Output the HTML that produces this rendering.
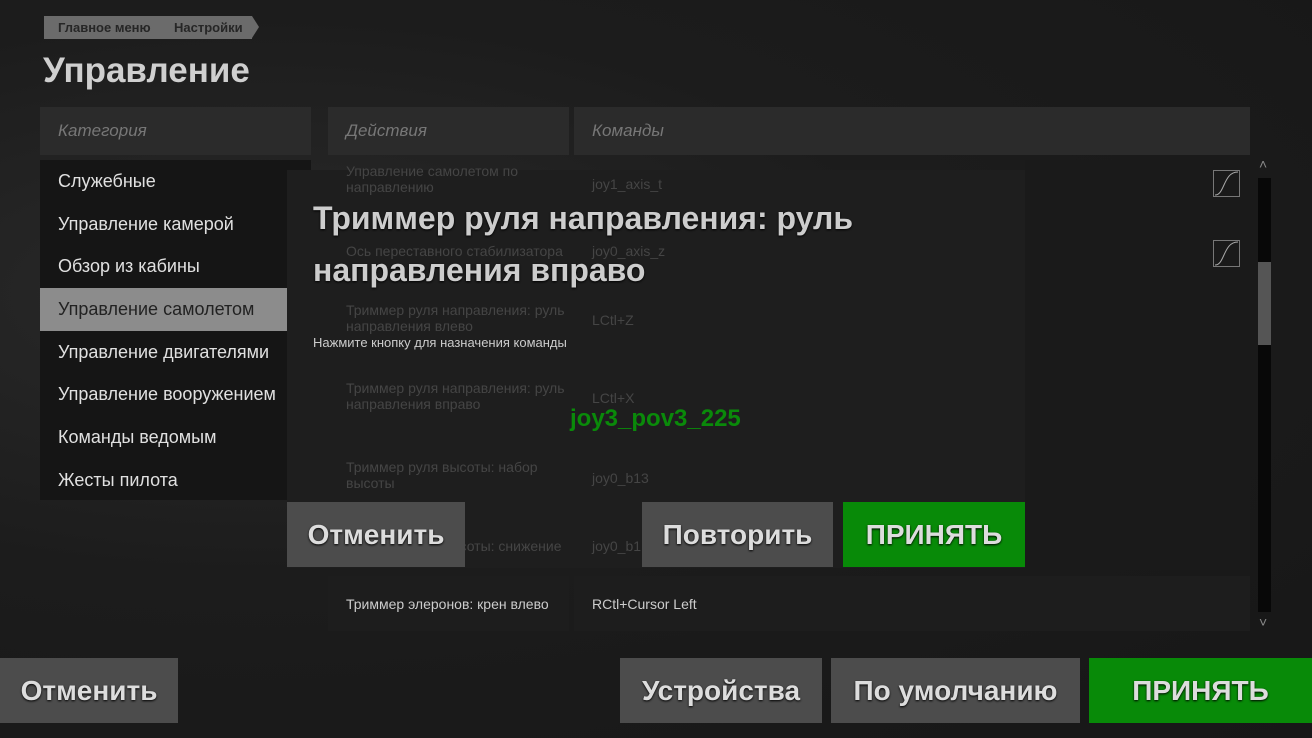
<!DOCTYPE html><html><head><meta charset="utf-8"><style>
*{margin:0;padding:0;box-sizing:border-box}
body{width:1312px;height:738px;overflow:hidden;background:#1b1b1b;font-family:"Liberation Sans Narrow","Liberation Sans",sans-serif;position:relative;color:#ddd}
.a{position:absolute}
.bg{background:radial-gradient(ellipse at 20% 40%,#2a2a2a 0,#1c1c1c 45%,#171717 100%)}
.crumb{top:16px;height:23px;background:#6b6b6b;color:#262626;font-weight:bold;font-size:13px;line-height:23px}
.hdr{top:107px;height:48px;background:#2b2b2b;color:#777;font-style:italic;font-size:17px;line-height:48px;padding-left:18px}
.cat{left:40px;width:247px;height:43px;line-height:43px;padding-left:18px;font-size:18px;color:#e0e0e0}
.cell{background:#1d1d1d}
.btn{height:65px;background:#4c4c4c;color:#ddd;font-size:28px;font-weight:bold;text-align:center;line-height:65px;text-shadow:0 1px 2px #000}
.g{background:#088a08}
.dim{color:#454545;font-size:14px}
</style></head><body>
<div class="a bg" style="left:0;top:0;width:1312px;height:738px"></div>
<div class="a crumb" style="left:44px;width:120px;padding-left:14px">Главное меню</div>
<div class="a crumb" style="left:164px;width:88px;padding-left:10px">Настройки</div>
<div class="a" style="left:252px;top:16px;border-left:7px solid #6b6b6b;border-top:11.5px solid transparent;border-bottom:11.5px solid transparent"></div>
<div class="a" style="left:43px;top:51px;font-size:35px;font-weight:bold;color:#cfcfcf">Управление</div>
<div class="a hdr" style="left:40px;width:271px">Категория</div>
<div class="a hdr" style="left:328px;width:241px">Действия</div>
<div class="a hdr" style="left:574px;width:676px">Команды</div>
<div class="a" style="left:40px;top:160px;width:271px;height:340px;background:#151515"></div>
<div class="a cat" style="top:160px">Служебные</div>
<div class="a cat" style="top:203px">Управление камерой</div>
<div class="a cat" style="top:245px">Обзор из кабины</div>
<div class="a cat" style="top:288px;background:#8c8c8c;color:#222">Управление самолетом</div>
<div class="a cat" style="top:331px">Управление двигателями</div>
<div class="a cat" style="top:373px">Управление вооружением</div>
<div class="a cat" style="top:416px">Команды ведомым</div>
<div class="a cat" style="top:459px">Жесты пилота</div>
<!-- table -->
<div class="a cell" style="left:328px;top:576px;width:241px;height:55px"></div>
<div class="a cell" style="left:574px;top:576px;width:676px;height:55px"></div>
<div class="a" style="left:346px;top:596px;font-size:14px;color:#ccc">Триммер элеронов: крен влево</div>
<div class="a" style="left:592px;top:596px;font-size:14px;color:#ccc">RCtl+Cursor Left</div>
<div class="a cell" style="left:1025px;top:160px;width:225px;height:410px;background:#1a1a1a"></div>
<svg class="a" style="left:1213px;top:170px" width="27" height="27"><rect x=".5" y=".5" width="26" height="26" fill="none" stroke="#777"/><path d="M2 25C12 25 10 2 25 2" fill="none" stroke="#aaa"/></svg>
<svg class="a" style="left:1213px;top:240px" width="27" height="27"><rect x=".5" y=".5" width="26" height="26" fill="none" stroke="#777"/><path d="M2 25C12 25 10 2 25 2" fill="none" stroke="#aaa"/></svg>
<div class="a" style="left:1258px;top:178px;width:13px;height:434px;background:#080808"></div>
<div class="a" style="left:1258px;top:262px;width:13px;height:83px;background:#555"></div>
<div class="a" style="left:1259px;top:156px;font-size:14px;color:#888">˄</div>
<div class="a" style="left:1259px;top:614px;font-size:14px;color:#888">˅</div>
<!-- modal -->
<div class="a" style="left:287px;top:170px;width:738px;height:398px;background:#1e1e1e"></div>
<div class="a dim" style="left:346px;top:163px">Управление самолетом по<br>направлению</div>
<div class="a dim" style="left:592px;top:176px">joy1_axis_t</div>
<div class="a dim" style="left:346px;top:243px">Ось переставного стабилизатора</div>
<div class="a dim" style="left:592px;top:243px">joy0_axis_z</div>
<div class="a dim" style="left:592px;top:312px">LCtl+Z</div>
<div class="a dim" style="left:346px;top:302px">Триммер руля направления: руль<br>направления влево</div>
<div class="a dim" style="left:346px;top:380px">Триммер руля направления: руль<br>направления вправо</div>
<div class="a dim" style="left:592px;top:390px">LCtl+X</div>
<div class="a dim" style="left:346px;top:459px">Триммер руля высоты: набор<br>высоты</div>
<div class="a dim" style="left:592px;top:470px">joy0_b13</div>
<div class="a dim" style="left:346px;top:538px">Триммер руля высоты: снижение</div>
<div class="a dim" style="left:592px;top:538px">joy0_b1</div>
<div class="a" style="left:313px;top:192px;font-size:32px;line-height:52px;font-weight:bold;color:#cdcdcd;text-shadow:0 1px 2px #000">Триммер руля направления: руль<br>направления вправо</div>
<div class="a" style="left:313px;top:335px;font-size:13px;color:#ccc">Нажмите кнопку для назначения команды</div>
<div class="a" style="left:570px;top:405px;font-size:24px;font-weight:bold;color:#0a8a0a">joy3_pov3_225</div>
<div class="a btn" style="left:287px;top:502px;width:178px">Отменить</div>
<div class="a btn" style="left:642px;top:502px;width:191px">Повторить</div>
<div class="a btn g" style="left:843px;top:502px;width:182px">ПРИНЯТЬ</div>
<!-- bottom -->
<div class="a btn" style="left:0;top:658px;width:178px">Отменить</div>
<div class="a btn" style="left:620px;top:658px;width:202px">Устройства</div>
<div class="a btn" style="left:831px;top:658px;width:249px">По умолчанию</div>
<div class="a btn g" style="left:1089px;top:658px;width:223px">ПРИНЯТЬ</div>
</body></html>
